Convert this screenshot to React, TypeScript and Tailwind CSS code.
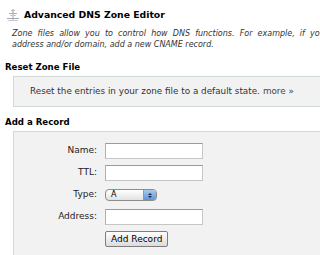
import React from 'react';

const ZoneIcon: React.FC = () => (
  <svg width="14" height="14" viewBox="0 0 14 14" className="shrink-0">
    <line x1="7" y1="1" x2="7" y2="13" stroke="#9aa3ad" strokeWidth="1" />
    <line x1="5" y1="2.5" x2="9" y2="2.5" stroke="#b8bec5" strokeWidth="1" />
    <line x1="3" y1="5.5" x2="11" y2="5.5" stroke="#a9b0b8" strokeWidth="1" />
    <line x1="4" y1="7.5" x2="10" y2="7.5" stroke="#c4c9ce" strokeWidth="1" />
    <line x1="1" y1="10.5" x2="13" y2="10.5" stroke="#a3aab2" strokeWidth="1" />
    <line x1="2" y1="12.5" x2="12" y2="12.5" stroke="#c9cdd2" strokeWidth="1" />
  </svg>
);

const TextInput: React.FC = () => (
  <div className="w-[98px] h-[16px] bg-white border border-[#c6c6c6] border-t-[#9a9a9a] border-l-[#b0b0b0]" />
);

const TypeSelect: React.FC = () => (
  <div className="flex w-[52px] h-[12px] rounded-[4px] border border-[#8c8c8c] overflow-hidden bg-gradient-to-b from-white to-[#e2e2e2] text-[8px] leading-[10px] text-black">
    <div className="flex-1 pl-[5px]">A</div>
    <div className="w-[13px] flex flex-col items-center justify-center gap-[1px] bg-gradient-to-b from-[#a9c8f0] to-[#5d95dc] border-l border-[#7a9cc8]">
      <div className="w-0 h-0 border-l-[2px] border-r-[2px] border-b-[2px] border-l-transparent border-r-transparent border-b-[#1e2a3a]" />
      <div className="w-0 h-0 border-l-[2px] border-r-[2px] border-t-[2px] border-l-transparent border-r-transparent border-t-[#1e2a3a]" />
    </div>
  </div>
);

const FormRow: React.FC<{ label: string; children: React.ReactNode }> = ({ label, children }) => (
  <div className="flex items-center h-[16px]">
    <div className="w-[83px] text-right text-[9px] text-[#222]">{label}</div>
    <div className="ml-[8px] flex items-center">{children}</div>
  </div>
);

const App: React.FC = () => {
  return (
    <div className="w-[320px] h-[255px] overflow-hidden bg-white" style={{ fontFamily: '"DejaVu Sans", Verdana, sans-serif' }}>
      <div className="w-[380px]">
        {/* Title */}
        <div className="flex items-center gap-[4px] pl-[6px] pt-[8px] h-[21px]">
          <ZoneIcon />
          <div className="text-[9.3px] font-bold text-black leading-[12px]">Advanced DNS Zone Editor</div>
        </div>

        {/* Intro (justified paragraph, first line stretched) */}
        <div className="pl-[12px] mt-[7px] text-[8px] italic leading-[11px] text-[#333] whitespace-nowrap">
          <div className="[word-spacing:2.6px]">Zone files allow you to control how DNS functions. For example, if you want to point a domain to another IP</div>
          <div>address and/or domain, add a new CNAME record.</div>
        </div>

        {/* Reset Zone File */}
        <div className="pl-[5px] mt-[12px] text-[8.6px] font-bold text-black leading-[11px]">Reset Zone File</div>
        <div className="ml-[13px] mt-[3px] h-[31px] border border-[#d0d9d5] bg-[#f2f2f2] flex items-center pl-[16px] text-[8.8px] text-[#333] whitespace-nowrap">
          Reset the entries in your zone file to a default state. <span className="ml-[3px] text-[#444]">more »</span>
        </div>

        {/* Add a Record */}
        <div className="pl-[5px] mt-[10px] text-[8.6px] font-bold text-black leading-[11px]">Add a Record</div>
        <div className="ml-[13px] mt-[3px] h-[140px] border border-[#d0d9d5] bg-[#f2f2f2] pt-[11px] flex flex-col gap-[6px]">
          <FormRow label="Name:">
            <TextInput />
          </FormRow>
          <FormRow label="TTL:">
            <TextInput />
          </FormRow>
          <FormRow label="Type:">
            <TypeSelect />
          </FormRow>
          <FormRow label="Address:">
            <TextInput />
          </FormRow>
          <FormRow label="">
            <button className="h-[16px] px-[5px] border border-[#7d7d7d] rounded-[2px] bg-gradient-to-b from-white to-[#dcdcdc] text-[9px] leading-[14px] text-black">
              Add Record
            </button>
          </FormRow>
        </div>
      </div>
    </div>
  );
};

export default App;
